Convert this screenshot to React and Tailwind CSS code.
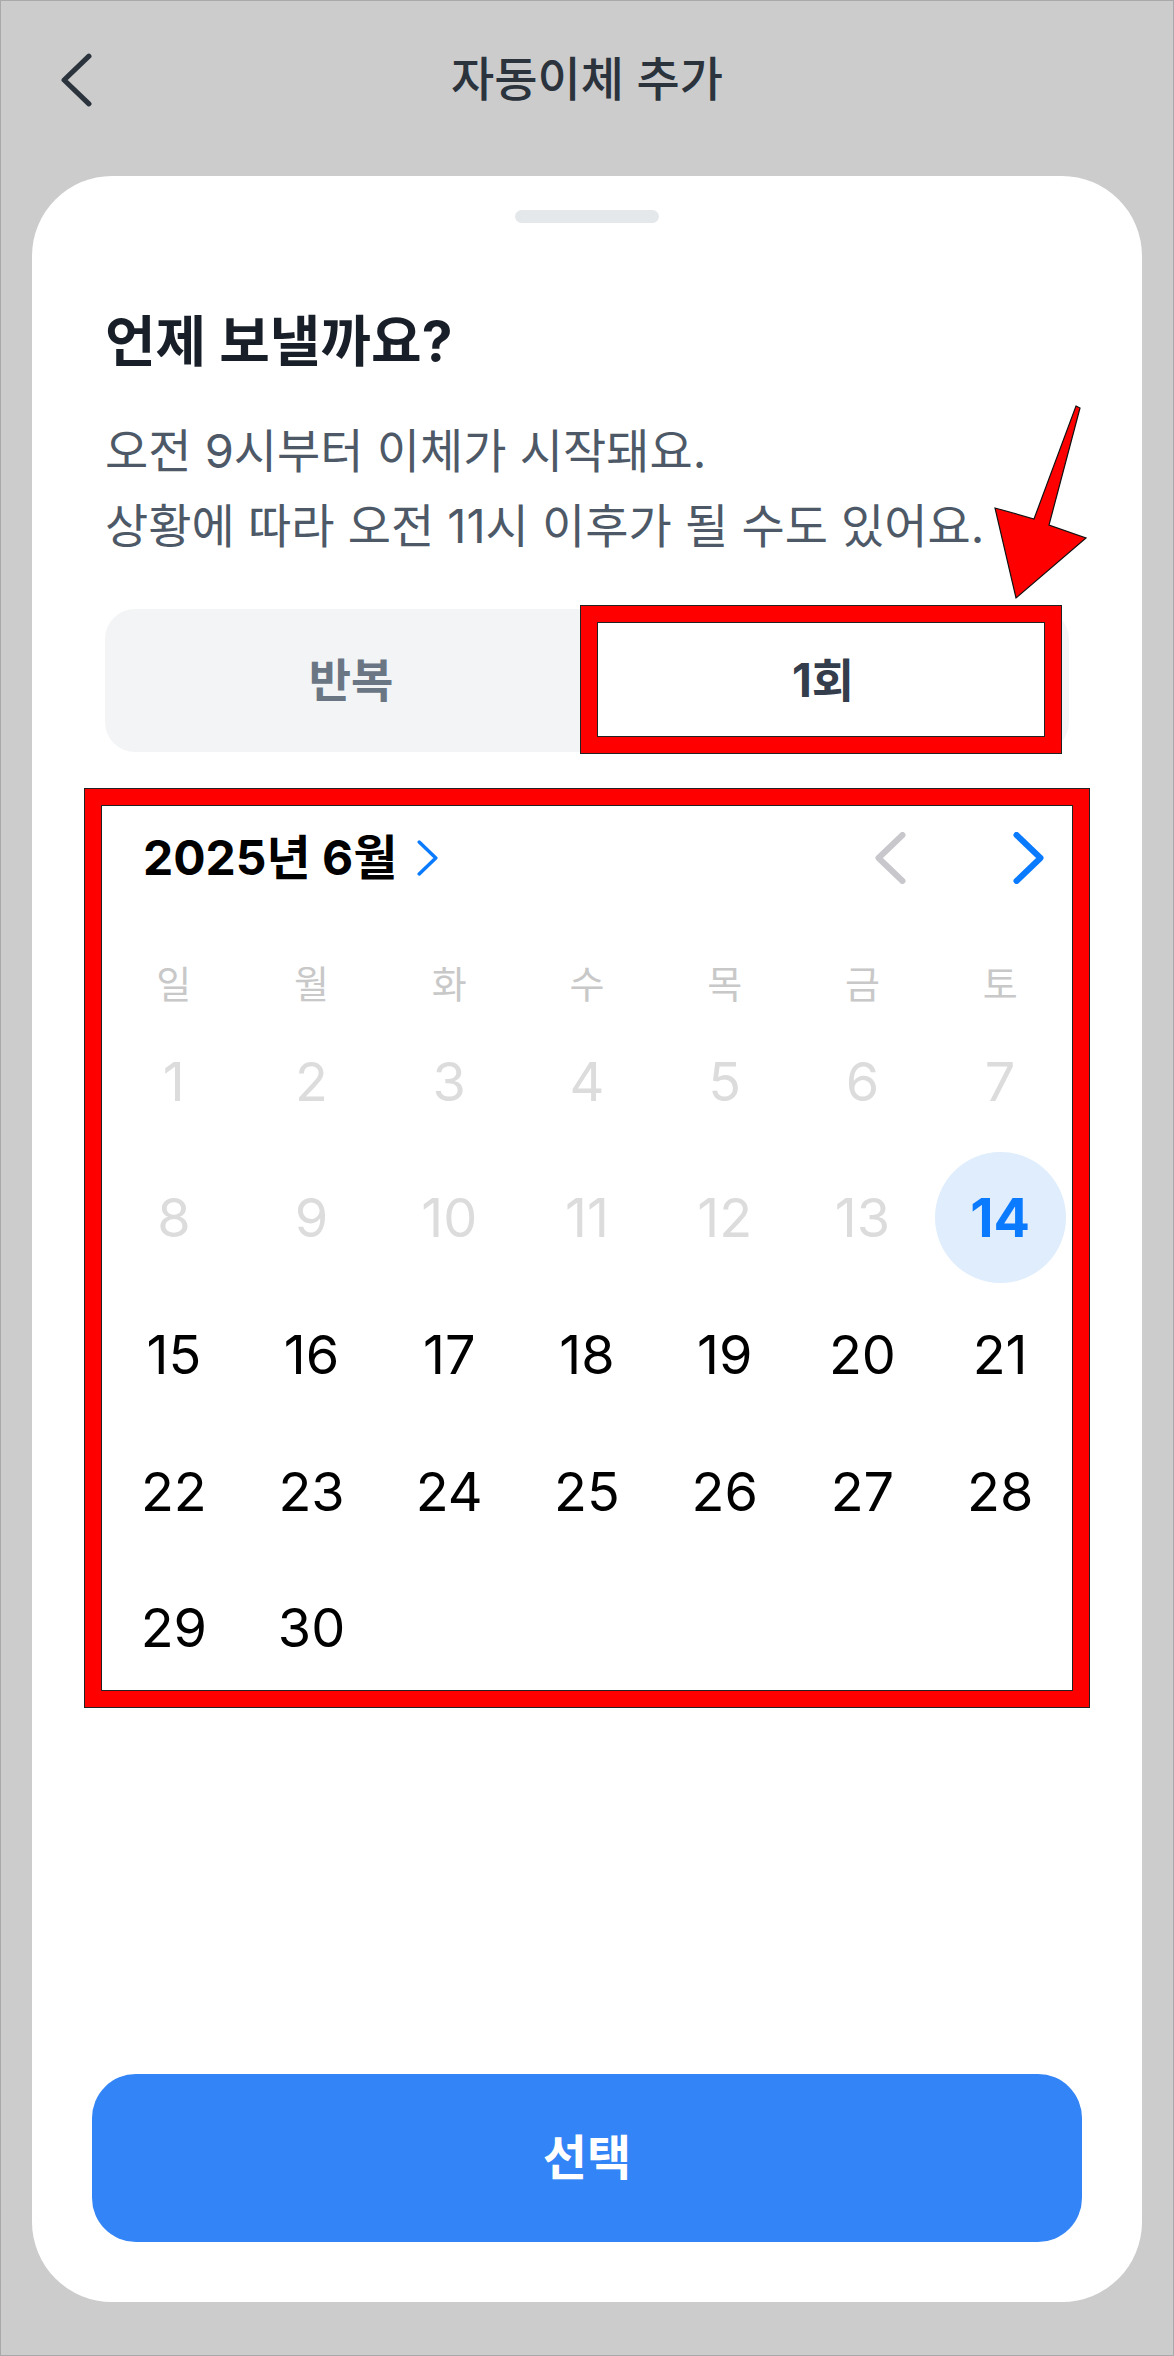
const weekdays = ['일', '월', '화', '수', '목', '금', '토']

const weeks = [
  [1, 2, 3, 4, 5, 6, 7],
  [8, 9, 10, 11, 12, 13, 14],
  [15, 16, 17, 18, 19, 20, 21],
  [22, 23, 24, 25, 26, 27, 28],
  [29, 30, null, null, null, null, null],
]

const SELECTED = 14

const Chevron = ({ dir = 'right', className, strokeWidth = 6 }) => (
  <svg viewBox="0 0 30 52" className={className} fill="none" stroke="currentColor" strokeWidth={strokeWidth} strokeLinecap="round" strokeLinejoin="round">
    {dir === 'right' ? <polyline points="3,3 27,26 3,49" /> : <polyline points="27,3 3,26 27,49" />}
  </svg>
)

const DayCell = ({ day }) => {
  if (!day) return <div />
  if (day === SELECTED) {
    return (
      <div className="flex items-center justify-center">
        <div className="flex h-[131px] w-[131px] items-center justify-center rounded-full bg-[#dfedfd] text-[54px] font-bold text-[#0a7aff]">
          {day}
        </div>
      </div>
    )
  }
  return (
    <div className={`flex items-center justify-center text-[54px] ${day < SELECTED ? 'text-[#dcdcdc]' : 'text-black'}`}>
      {day}
    </div>
  )
}

const App = () => {
  return (
    <div className="relative h-[2356px] w-[1174px] overflow-hidden border border-[#a9a9a9] bg-[#cccccc] font-['Inter','Noto_Sans_CJK_KR',sans-serif]">
      {/* top bar */}
      <div className="grid h-[157px] grid-cols-[1fr_auto_1fr] items-center px-[60px]">
        <Chevron dir="left" className="h-[54px] w-[31px] text-[#2b333d]" strokeWidth={5} />
        <h1 className="text-[47px] font-medium text-[#2b333d]">자동이체 추가</h1>
        <div />
      </div>

      {/* bottom sheet */}
      <div className="mx-[31px] mt-[18px] flex h-[2126px] flex-col rounded-[80px] bg-white">
        <div className="mx-auto mt-[34px] h-[13px] w-[144px] rounded-full bg-[#e5e8eb]" />

        <div className="px-[73px]">
          <h2 className="mt-[88px] text-[55px] font-bold leading-[60px] text-[#191f28]">언제 보낼까요?</h2>
          <p className="mt-[42px] text-[47px] leading-[75px] text-[#4e5968]">
            오전 9시부터 이체가 시작돼요.
            <br />
            상황에 따라 오전 11시 이후가 될 수도 있어요.
          </p>

          {/* segmented control */}
          <div className="relative mt-[46px] flex h-[143px] rounded-[30px] bg-[#f2f4f6] p-[10px]">
            <button className="flex-1 text-[46px] font-semibold text-[#6b7684]">반복</button>
            <button className="flex-1 rounded-[22px] bg-white text-[46px] font-bold text-[#333d4b] shadow-sm">1회</button>
            <div className="pointer-events-none absolute left-[476px] top-[-3px] h-[147px] w-[480px] border-[16px] border-[#ff0000] shadow-[0_0_0_1px_#222,inset_0_0_0_1px_#222]" />
          </div>

          {/* calendar */}
          <div className="relative mt-[80px]">
            <div className="flex h-[52px] items-center">
              <span className="ml-[38px] text-[48px] font-bold text-black">2025년 6월</span>
              <Chevron className="ml-[20px] h-[36px] w-[21px] text-[#0a7aff]" strokeWidth={5} />
              <div className="ml-auto mr-[25px] flex items-center gap-[107px]">
                <Chevron dir="left" className="h-[52px] w-[31px] text-[#c7c7cc]" strokeWidth={6} />
                <Chevron className="h-[52px] w-[31px] text-[#0a7aff]" strokeWidth={6} />
              </div>
            </div>

            <div className="mt-[71px] grid h-[58px] grid-cols-7">
              {weekdays.map((w) => (
                <div key={w} className="flex items-center justify-center text-[38px] text-[#c8c8c8]">
                  {w}
                </div>
              ))}
            </div>

            {weeks.map((week, i) => (
              <div key={i} className="grid h-[136.6px] grid-cols-7">
                {week.map((d, j) => (
                  <DayCell key={j} day={d} />
                ))}
              </div>
            ))}

            <div className="pointer-events-none absolute left-[-20px] top-[-43px] h-[918px] w-[1004px] border-[16px] border-[#ff0000] shadow-[0_0_0_1px_#222,inset_0_0_0_1px_#222]" />
          </div>
        </div>

        <button className="mx-[60px] mb-[60px] mt-auto h-[168px] rounded-[44px] bg-[#3384f6] text-[48px] font-semibold text-white">
          선택
        </button>
      </div>

      {/* annotation arrow */}
      <svg className="pointer-events-none absolute left-[990px] top-[400px] h-[200px] w-[100px]" viewBox="0 0 100 200">
        <polygon points="85,5 89,7 58,124 95,137 25,197 4,107 43,118" fill="#ff0000" stroke="#111" strokeWidth="1.2" strokeLinejoin="miter" />
      </svg>
    </div>
  )
}

export default App
